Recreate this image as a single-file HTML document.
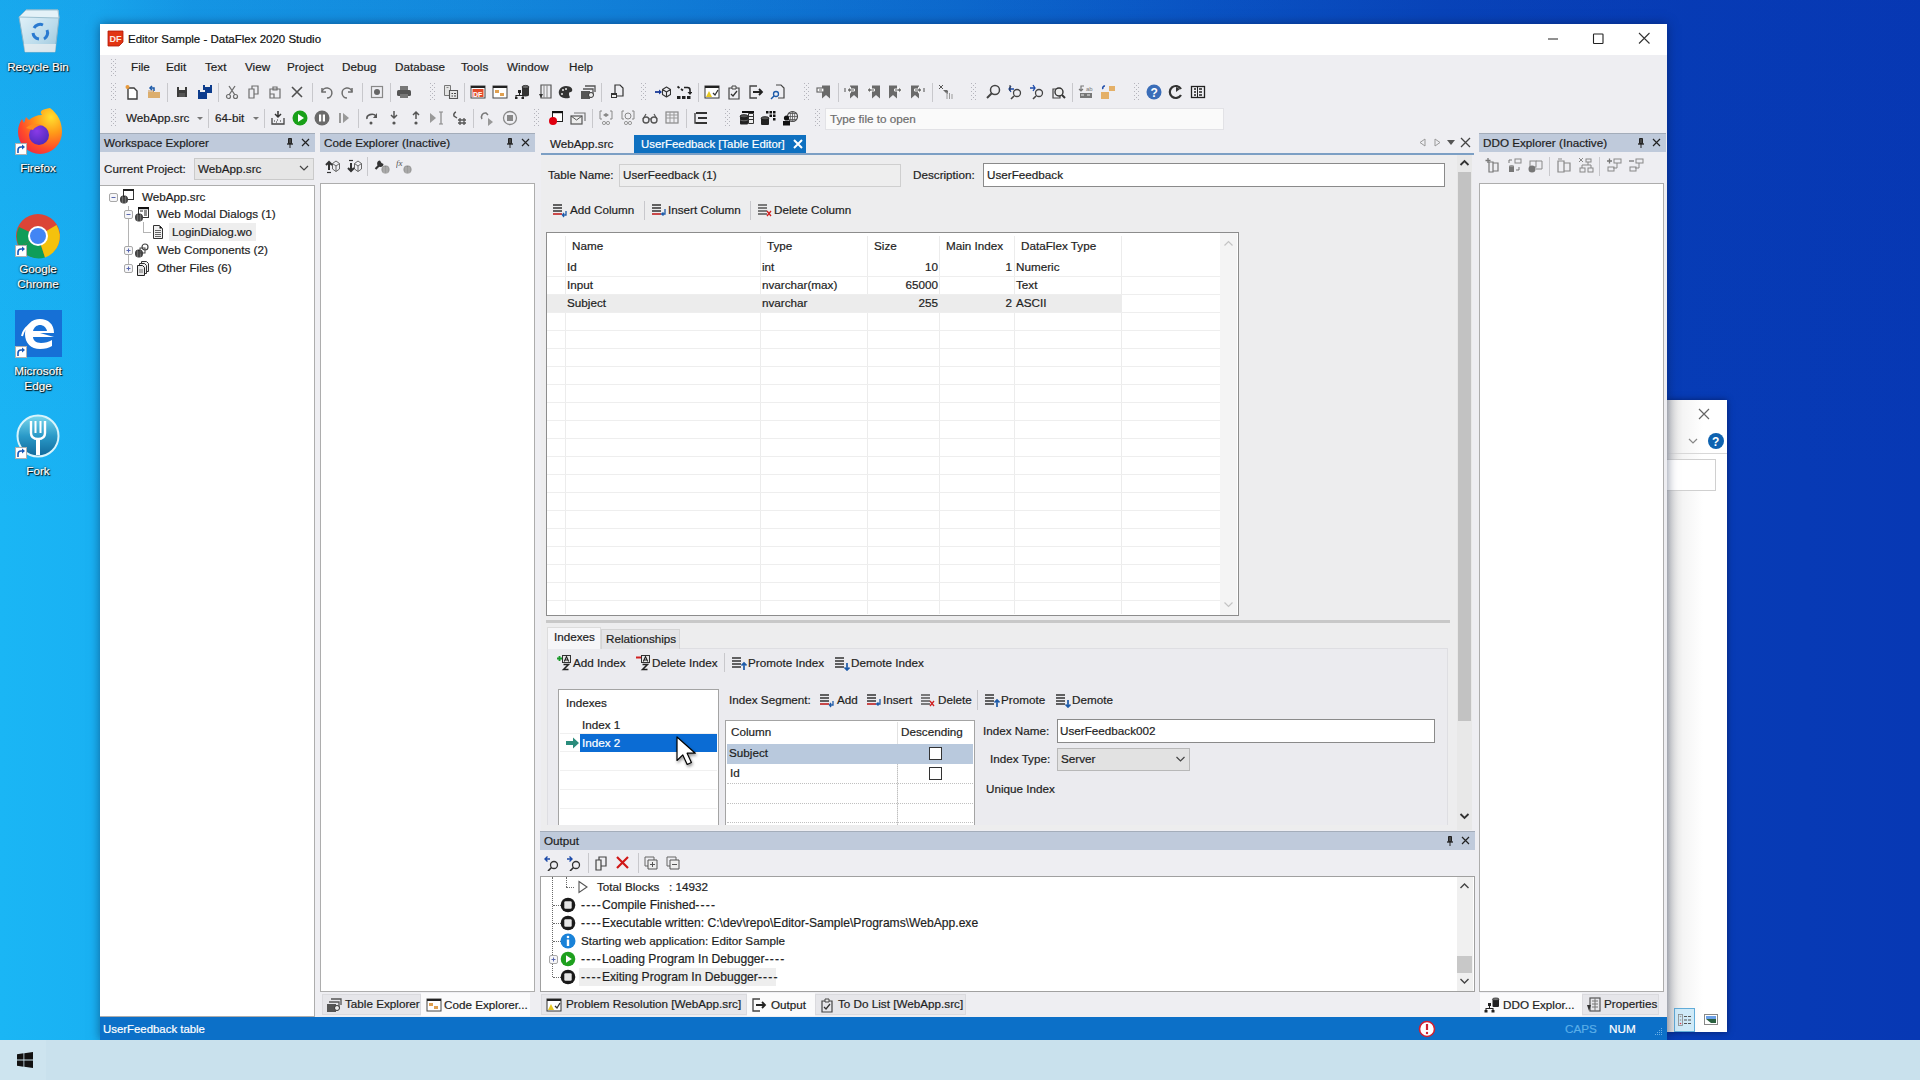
<!DOCTYPE html>
<html><head><meta charset="utf-8"><style>
html,body{margin:0;padding:0;width:1920px;height:1080px;overflow:hidden;font-family:"Liberation Sans",sans-serif;}
body>div,body>svg{position:absolute;}
.t{white-space:nowrap;-webkit-text-stroke:0.2px currentColor;}
</style></head><body>
<svg width="0" height="0" style="position:absolute"><defs><pattern id="gp" width="4" height="4" patternUnits="userSpaceOnUse"><rect x="1" y="0" width="1" height="1" fill="#b4b4bc"/><rect x="3" y="2" width="1" height="1" fill="#b4b4bc"/></pattern></defs></svg>
<div style="left:0px;top:0px;width:1920px;height:1040px;background:linear-gradient(90deg,#1ab6f5 0%,#19b1f3 5%,#16a0ea 10%,#1491e1 25%,#0d6ed0 50%,#0a57c6 62.5%,#0845ba 75%,#073cb6 88%,#0738b4 100%)"></div>
<div style="left:0px;top:0px;width:1920px;height:1040px;background:linear-gradient(180deg,rgba(8,50,170,0.10) 0%,rgba(8,50,170,0.04) 25%,rgba(8,50,170,0) 50%)"></div>
<svg style="position:absolute;left:16px;top:6px;" width="46" height="50" viewBox="0 0 46 50"><defs><linearGradient id="rbg" x1="0" y1="0" x2="1" y2="1"><stop offset="0" stop-color="#e6f4fa"/><stop offset="0.6" stop-color="#bcdcec"/><stop offset="1" stop-color="#9cc4d8"/></linearGradient></defs><path d="M3 11L10 4h32l1 8-4 34H9z" fill="url(#rbg)" stroke="#8ab4c8" stroke-width="1"/><path d="M3 11L10 4h32l1 8z" fill="#e4f2f8" stroke="#9cc0d0" stroke-width="1"/><path d="M8 38h32l-1 8H9z" fill="#e8eef0" opacity=".8"/><g fill="none" stroke="#2a7ad0" stroke-width="3"><path d="M18 22a7 7 0 0 1 9-3"/><path d="M31 24a7 7 0 0 1-3 9"/><path d="M23 33a7 7 0 0 1-6-6"/></g></svg>
<div class="t" style="left:0px;top:58.5px;height:15px;line-height:15px;font-size:11.7px;width:76px;text-align:center;color:#fff;text-shadow:0 0 2px #000,1px 1px 1px #000;">Recycle Bin</div>
<svg style="position:absolute;left:14px;top:106px;" width="50" height="50" viewBox="0 0 50 50"><defs><radialGradient id="ffg" cx="0.75" cy="0.2" r="1"><stop offset="0" stop-color="#ffe030"/><stop offset="0.35" stop-color="#ff9a18"/><stop offset="0.7" stop-color="#ff4a2a"/><stop offset="1" stop-color="#e8204a"/></radialGradient><radialGradient id="ffp" cx="0.4" cy="0.3" r="0.8"><stop offset="0" stop-color="#8a3ae8"/><stop offset="1" stop-color="#4a28b8"/></radialGradient></defs><path d="M36 2c8 6 12 14 12 24a22 22 0 0 1-44 0c0-6 2-10 4-13l2 4 2-6 3 3c3-3 8-5 13-5-2-3-3-5 8-7z" fill="url(#ffg)"/><circle cx="25" cy="29" r="10" fill="url(#ffp)"/><path d="M12 22c4-4 10-5 15-3-4 1-7 3-8 5z" fill="#ff8a20"/></svg>
<svg style="position:absolute;left:15px;top:143px;" width="12" height="12" viewBox="0 0 12 12"><rect x=".5" y=".5" width="11" height="11" fill="#fff" stroke="#b0b0b0"/><path d="M3 10V7a3 3 0 0 1 3-3h2" stroke="#1a5ab8" stroke-width="1.6" fill="none"/><path d="M7 1.5L10 4 7 6.5z" fill="#1a5ab8"/></svg>
<div class="t" style="left:0px;top:159.5px;height:15px;line-height:15px;font-size:11.7px;width:76px;text-align:center;color:#fff;text-shadow:0 0 2px #000,1px 1px 1px #000;">Firefox</div>
<svg style="position:absolute;left:15px;top:213px;" width="46" height="46" viewBox="0 0 46 46"><circle cx="23" cy="23" r="22" fill="#db4437"/><path d="M23 23L4.5 34A22 22 0 0 0 30 44.5z" fill="#0f9d58"/><path d="M23 23L41.5 12A22 22 0 0 1 30 44.5z" fill="#f4c20d"/><path d="M23 23L4.5 34A22 22 0 0 1 4 14z" fill="#0f9d58"/><circle cx="23" cy="23" r="10" fill="#fff"/><circle cx="23" cy="23" r="8" fill="#4285f4"/></svg>
<svg style="position:absolute;left:15px;top:245px;" width="12" height="12" viewBox="0 0 12 12"><rect x=".5" y=".5" width="11" height="11" fill="#fff" stroke="#b0b0b0"/><path d="M3 10V7a3 3 0 0 1 3-3h2" stroke="#1a5ab8" stroke-width="1.6" fill="none"/><path d="M7 1.5L10 4 7 6.5z" fill="#1a5ab8"/></svg>
<div class="t" style="left:0px;top:260.5px;height:15px;line-height:15px;font-size:11.7px;width:76px;text-align:center;color:#fff;text-shadow:0 0 2px #000,1px 1px 1px #000;">Google</div>
<div class="t" style="left:0px;top:275.5px;height:15px;line-height:15px;font-size:11.7px;width:76px;text-align:center;color:#fff;text-shadow:0 0 2px #000,1px 1px 1px #000;">Chrome</div>
<div style="left:15px;top:310px;width:47px;height:47px;background:#1670d6"></div>
<svg style="position:absolute;left:15px;top:310px;" width="47" height="47" viewBox="0 0 47 47"><path d="M25 23h14c0-9-6-14-14-14S10 15 10 24s6 15 15 15c5 0 9-1 12-3v-6c-3 2-7 3-11 3-5 0-8-3-8-6h21" fill="#fff"/><path d="M18 21c1-4 4-6 7-6s6 2 7 6z" fill="#1670d6"/><path d="M7 26c2-9 11-15 20-13" stroke="#fff" stroke-width="2" fill="none"/></svg>
<svg style="position:absolute;left:15px;top:346px;" width="12" height="12" viewBox="0 0 12 12"><rect x=".5" y=".5" width="11" height="11" fill="#fff" stroke="#b0b0b0"/><path d="M3 10V7a3 3 0 0 1 3-3h2" stroke="#1a5ab8" stroke-width="1.6" fill="none"/><path d="M7 1.5L10 4 7 6.5z" fill="#1a5ab8"/></svg>
<div class="t" style="left:0px;top:362.5px;height:15px;line-height:15px;font-size:11.7px;width:76px;text-align:center;color:#fff;text-shadow:0 0 2px #000,1px 1px 1px #000;">Microsoft</div>
<div class="t" style="left:0px;top:377.5px;height:15px;line-height:15px;font-size:11.7px;width:76px;text-align:center;color:#fff;text-shadow:0 0 2px #000,1px 1px 1px #000;">Edge</div>
<svg style="position:absolute;left:16px;top:414px;" width="44" height="44" viewBox="0 0 44 44"><defs><linearGradient id="fkg" x1="0" y1="0" x2="0" y2="1"><stop offset="0" stop-color="#7ad8ee"/><stop offset="0.5" stop-color="#2a9ac8"/><stop offset="1" stop-color="#10689a"/></linearGradient></defs><circle cx="22" cy="22" r="20.5" fill="url(#fkg)" stroke="#d8f4fc" stroke-width="2"/><path d="M15 7v12c0 4 3 6 7 6s7-2 7-6V7" stroke="#fff" stroke-width="2.4" fill="none"/><path d="M19.5 7v12M24.5 7v12" stroke="#fff" stroke-width="2"/><path d="M22 24v17" stroke="#fff" stroke-width="4"/></svg>
<svg style="position:absolute;left:15px;top:447px;" width="12" height="12" viewBox="0 0 12 12"><rect x=".5" y=".5" width="11" height="11" fill="#fff" stroke="#b0b0b0"/><path d="M3 10V7a3 3 0 0 1 3-3h2" stroke="#1a5ab8" stroke-width="1.6" fill="none"/><path d="M7 1.5L10 4 7 6.5z" fill="#1a5ab8"/></svg>
<div class="t" style="left:0px;top:462.5px;height:15px;line-height:15px;font-size:11.7px;width:76px;text-align:center;color:#fff;text-shadow:0 0 2px #000,1px 1px 1px #000;">Fork</div>
<div style="left:1667px;top:400px;width:60px;height:632px;background:linear-gradient(90deg,#d8d8d8 0%,#f4f4f4 25%,#ffffff 60%);box-shadow:0 0 6px rgba(0,0,30,0.5)"></div>
<svg style="position:absolute;left:1697px;top:407px;" width="14" height="14" viewBox="0 0 14 14"><path d="M2 2l10 10M12 2L2 12" stroke="#666" stroke-width="1.2"/></svg>
<svg style="position:absolute;left:1687px;top:436px;" width="12" height="10" viewBox="0 0 12 10"><path d="M2 3l4 4 4-4" stroke="#888" stroke-width="1.2" fill="none"/></svg>
<svg style="position:absolute;left:1707px;top:432px;" width="18" height="18" viewBox="0 0 18 18"><circle cx="9" cy="9" r="8" fill="#0e62b0"/><text x="5" y="14" font-size="12" font-weight="bold" font-family="Liberation Sans" fill="#fff">?</text></svg>
<div style="left:1667px;top:453px;width:60px;height:1px;background:#d8d8d8"></div>
<div style="left:1667px;top:459px;width:48px;height:30px;border:1px solid #d0d0d0;border-left:none;background:#fff"></div>
<div style="left:1674px;top:1008px;width:21px;height:24px;background:#cfeaf8;border:1px solid #62acd8;box-sizing:border-box"></div>
<svg style="position:absolute;left:1677px;top:1013px;" width="15" height="14" viewBox="0 0 15 14"><rect x="1.5" y="1.5" width="4" height="11" fill="none" stroke="#888" stroke-width=".8"/><circle cx="3.5" cy="3.5" r=".8" fill="#999"/><circle cx="3.5" cy="7" r=".8" fill="#999"/><circle cx="3.5" cy="10.5" r=".8" fill="#e04050"/><path d="M7 3.5h3M11 3.5h3M7 7h3M11 7h3M7 10.5h3M11 10.5h3" stroke="#555" stroke-width="1"/></svg>
<svg style="position:absolute;left:1704px;top:1014px;" width="14" height="11" viewBox="0 0 14 11"><rect x=".5" y=".5" width="13" height="10" fill="#fff" stroke="#888"/><rect x="2" y="2" width="10" height="3" fill="#6aa0e8"/><path d="M2 5l5 4h5V5" fill="#2a6040"/></svg>
<div style="left:100px;top:24px;width:1567px;height:1016px;background:#eeeef2;box-shadow:0 0 10px rgba(0,20,60,0.5)"></div>
<div style="left:100px;top:24px;width:1567px;height:31px;background:#ffffff"></div>
<svg style="position:absolute;left:107px;top:30px;" width="17" height="17" viewBox="0 0 17 17"><path d="M1 1h15v11l-4 4H1z" fill="#e23412" stroke="#b01808" stroke-width=".8"/><text x="2.5" y="12" font-size="9" font-weight="bold" font-family="Liberation Sans" fill="#fde8e0">DF</text></svg>
<div class="t" style="left:128px;top:31.0px;height:16px;line-height:16px;font-size:11.5px;color:#111;">Editor Sample - DataFlex 2020 Studio</div>
<svg style="position:absolute;left:1546px;top:32px;" width="14" height="14" viewBox="0 0 14 14"><path d="M2 7h10" stroke="#222" stroke-width="1"/></svg>
<svg style="position:absolute;left:1590px;top:31px;" width="16" height="16" viewBox="0 0 16 16"><rect x="3.5" y="3" width="9.5" height="9.5" rx=".6" fill="none" stroke="#222" stroke-width="1.1"/></svg>
<svg style="position:absolute;left:1636px;top:30px;" width="16" height="16" viewBox="0 0 16 16"><path d="M3 3l10.5 10.5M13.5 3L3 13.5" stroke="#333" stroke-width="1.1"/></svg>
<svg style="position:absolute;left:110px;top:59px;" width="6" height="18" viewBox="0 0 6 18"><rect width="6" height="18" fill="url(#gp)"/></svg>
<div class="t" style="left:131px;top:59.0px;height:16px;line-height:16px;font-size:11.7px;color:#1e1e1e">File</div>
<div class="t" style="left:166px;top:59.0px;height:16px;line-height:16px;font-size:11.7px;color:#1e1e1e">Edit</div>
<div class="t" style="left:205px;top:59.0px;height:16px;line-height:16px;font-size:11.7px;color:#1e1e1e">Text</div>
<div class="t" style="left:245px;top:59.0px;height:16px;line-height:16px;font-size:11.7px;color:#1e1e1e">View</div>
<div class="t" style="left:287px;top:59.0px;height:16px;line-height:16px;font-size:11.7px;color:#1e1e1e">Project</div>
<div class="t" style="left:342px;top:59.0px;height:16px;line-height:16px;font-size:11.7px;color:#1e1e1e">Debug</div>
<div class="t" style="left:395px;top:59.0px;height:16px;line-height:16px;font-size:11.7px;color:#1e1e1e">Database</div>
<div class="t" style="left:461px;top:59.0px;height:16px;line-height:16px;font-size:11.7px;color:#1e1e1e">Tools</div>
<div class="t" style="left:507px;top:59.0px;height:16px;line-height:16px;font-size:11.7px;color:#1e1e1e">Window</div>
<div class="t" style="left:569px;top:59.0px;height:16px;line-height:16px;font-size:11.7px;color:#1e1e1e">Help</div>
<svg style="position:absolute;left:110px;top:83px;" width="6" height="18" viewBox="0 0 6 18"><rect width="6" height="18" fill="url(#gp)"/></svg>
<svg style="position:absolute;left:124px;top:84px;" width="16" height="16" viewBox="0 0 16 16"><path d="M4 4h6l3 3v8H4z" fill="#fff" stroke="#3c3c3c" stroke-width="1.4"/><circle cx="3.5" cy="3" r="2" fill="#e89a3c"/></svg>
<svg style="position:absolute;left:146px;top:84px;" width="16" height="16" viewBox="0 0 16 16"><path d="M2 8h12v6H2z" fill="#dcae6e"/><path d="M2 7h5l1 1" fill="none" stroke="#c89050"/><path d="M6 2l-2 2 2 2" fill="none" stroke="#1c5aa8" stroke-width="1.5"/><path d="M4 4h4v3" fill="none" stroke="#1c5aa8" stroke-width="1.5"/></svg>
<svg style="position:absolute;left:174px;top:84px;" width="16" height="16" viewBox="0 0 16 16"><path d="M3 3h10v10H3z" fill="#3c3c3c"/><rect x="5" y="3" width="6" height="3" fill="#eee"/><rect x="5" y="9" width="6" height="4" fill="#555"/></svg>
<svg style="position:absolute;left:197px;top:84px;" width="16" height="16" viewBox="0 0 16 16"><path d="M6 1h9v8H6z" fill="#0d3c8c"/><path d="M1 6h9v9H1z" fill="#0d3c8c"/><rect x="3" y="6" width="5" height="2" fill="#eee"/><rect x="8" y="1" width="5" height="2" fill="#eee"/></svg>
<svg style="position:absolute;left:224px;top:84px;" width="16" height="16" viewBox="0 0 16 16"><path d="M5 2l6 9M11 2L5 11" stroke="#6e6e6e" stroke-width="1.3" fill="none"/><circle cx="4.5" cy="12.5" r="2" fill="none" stroke="#6e6e6e" stroke-width="1.2"/><circle cx="11.5" cy="12.5" r="2" fill="none" stroke="#6e6e6e" stroke-width="1.2"/></svg>
<svg style="position:absolute;left:246px;top:84px;" width="16" height="16" viewBox="0 0 16 16"><path d="M6 2h6v8H6z" fill="none" stroke="#6e6e6e" stroke-width="1.2"/><path d="M3 5h5v9H3z" fill="#eeeef2" stroke="#6e6e6e" stroke-width="1.2"/></svg>
<svg style="position:absolute;left:267px;top:84px;" width="16" height="16" viewBox="0 0 16 16"><path d="M3 5h10v9H3z" fill="none" stroke="#6e6e6e" stroke-width="1.2"/><path d="M6 3h4v3H6z" fill="none" stroke="#6e6e6e" stroke-width="1.2"/><path d="M3 10h4v4" fill="none" stroke="#6e6e6e" stroke-width="1.2"/></svg>
<svg style="position:absolute;left:289px;top:84px;" width="16" height="16" viewBox="0 0 16 16"><path d="M3 3l10 10M13 3L3 13" stroke="#505050" stroke-width="1.6"/></svg>
<svg style="position:absolute;left:318px;top:84px;" width="16" height="16" viewBox="0 0 16 16"><path d="M4 4v4h4" fill="none" stroke="#6e6e6e" stroke-width="1.5"/><path d="M4 8a5 5 0 1 1 5 6" fill="none" stroke="#6e6e6e" stroke-width="1.5"/></svg>
<svg style="position:absolute;left:340px;top:84px;" width="16" height="16" viewBox="0 0 16 16"><path d="M12 4v4H8" fill="none" stroke="#6e6e6e" stroke-width="1.5"/><path d="M12 8a5 5 0 1 0-5 6" fill="none" stroke="#6e6e6e" stroke-width="1.5"/></svg>
<svg style="position:absolute;left:369px;top:84px;" width="16" height="16" viewBox="0 0 16 16"><rect x="2.5" y="2.5" width="11" height="11" fill="none" stroke="#888" stroke-width="1.2"/><circle cx="8" cy="8" r="3" fill="#666"/></svg>
<svg style="position:absolute;left:396px;top:84px;" width="16" height="16" viewBox="0 0 16 16"><rect x="1" y="6" width="14" height="6" rx="1.5" fill="#555"/><rect x="4" y="2" width="8" height="4" fill="#777"/><rect x="4" y="10" width="8" height="4" fill="#777"/></svg>
<div style="left:167px;top:83px;width:1px;height:19px;background:#c8c8cc"></div>
<div style="left:218px;top:83px;width:1px;height:19px;background:#c8c8cc"></div>
<div style="left:312px;top:83px;width:1px;height:19px;background:#c8c8cc"></div>
<div style="left:362px;top:83px;width:1px;height:19px;background:#c8c8cc"></div>
<div style="left:390px;top:83px;width:1px;height:19px;background:#c8c8cc"></div>
<svg style="position:absolute;left:429px;top:83px;" width="6" height="18" viewBox="0 0 6 18"><rect width="6" height="18" fill="url(#gp)"/></svg>
<svg style="position:absolute;left:443px;top:84px;" width="16" height="16" viewBox="0 0 16 16"><path d="M1.5 1.5h6v10h-6z" fill="#e4e4e4" stroke="#777"/><path d="M3.5 3.5h2" stroke="#888"/><path d="M6.5 6.5h8v8h-8z" fill="#e8e8e8" stroke="#555" stroke-width="1.1"/><path d="M8.5 9.5h1.5M11 9.5h2M8.5 12h1.5M11 12h2" stroke="#444" stroke-width="1.2"/></svg>
<svg style="position:absolute;left:470px;top:84px;" width="16" height="16" viewBox="0 0 16 16"><rect x="1" y="2" width="14" height="12" fill="#fff" stroke="#444"/><rect x="1" y="2" width="14" height="2" fill="#222"/><rect x="2.5" y="5" width="11" height="8" fill="#e24a2a"/><text x="3" y="12.5" font-size="7" font-family="Liberation Sans" font-weight="bold" fill="#fff">DF</text></svg>
<svg style="position:absolute;left:492px;top:84px;" width="16" height="16" viewBox="0 0 16 16"><rect x="1" y="2" width="14" height="12" fill="#fff" stroke="#444"/><rect x="1" y="2" width="14" height="2" fill="#222"/><rect x="3" y="6" width="4" height="3" fill="#e0a050"/><rect x="8" y="9" width="4" height="3" fill="#e0a050"/></svg>
<svg style="position:absolute;left:514px;top:84px;" width="16" height="16" viewBox="0 0 16 16"><rect x="8" y="3" width="7" height="8" fill="#333"/><ellipse cx="11.5" cy="3" rx="3.5" ry="1.6" fill="#666" stroke="#222" stroke-width=".8"/><ellipse cx="11.5" cy="11" rx="3.5" ry="1.4" fill="#333"/><rect x="4" y="6" width="3" height="3" fill="#222"/><path d="M5.5 9v2.5M2 14v-2.5h7V14" stroke="#222" stroke-width="1.1" fill="none"/><rect x="1" y="13" width="2.5" height="2" fill="#222"/><rect x="7.5" y="13" width="2.5" height="2" fill="#222"/></svg>
<svg style="position:absolute;left:537px;top:84px;" width="16" height="16" viewBox="0 0 16 16"><path d="M4 1h10v13H4z" fill="none" stroke="#555" stroke-width="1.2"/><path d="M7 1v13M10 1v13" stroke="#888"/><path d="M2 10l2 4 2-4" fill="#333"/></svg>
<svg style="position:absolute;left:558px;top:84px;" width="16" height="16" viewBox="0 0 16 16"><path d="M8 2c5 0 7 3 6 5-1 2-3 0-3 3s2 3 0 4c-3 1-9 0-10-4S3 2 8 2z" fill="#333"/><circle cx="5" cy="6" r="1" fill="#eee"/><circle cx="8" cy="5" r="1" fill="#eee"/><circle cx="4" cy="10" r="1" fill="#eee"/></svg>
<svg style="position:absolute;left:580px;top:84px;" width="16" height="16" viewBox="0 0 16 16"><rect x="1" y="7" width="9" height="8" fill="#555"/><path d="M3 5h10v6" fill="none" stroke="#555" stroke-width="1.3"/><path d="M5 2h10v6" fill="none" stroke="#555" stroke-width="1.3"/><circle cx="11" cy="11" r="2.5" fill="#eee" stroke="#333"/></svg>
<svg style="position:absolute;left:609px;top:84px;" width="16" height="16" viewBox="0 0 16 16"><path d="M6 1h5l3 3v8H6z" fill="none" stroke="#333" stroke-width="1.2"/><rect x="2" y="9" width="6" height="5" fill="#333"/><rect x="3" y="11" width="4" height="2" fill="#eee"/></svg>
<div style="left:464px;top:83px;width:1px;height:19px;background:#c8c8cc"></div>
<div style="left:601px;top:83px;width:1px;height:19px;background:#c8c8cc"></div>
<svg style="position:absolute;left:640px;top:83px;" width="6" height="18" viewBox="0 0 6 18"><rect width="6" height="18" fill="url(#gp)"/></svg>
<svg style="position:absolute;left:655px;top:84px;" width="16" height="16" viewBox="0 0 16 16"><path d="M0 8h5" stroke="#1a3a98" stroke-width="1.8"/><path d="M4 5.5L7 8 4 10.5z" fill="#1a3a98"/><path d="M7.5 5.5L11.5 3l4 2.5v5l-4 2.5-4-2.5z M7.5 5.5l4 2.5 4-2.5M11.5 8v5" fill="none" stroke="#333" stroke-width="1.1" stroke-linejoin="round"/></svg>
<svg style="position:absolute;left:676px;top:84px;" width="16" height="16" viewBox="0 0 16 16"><path d="M1.5 2.5l2 1.5M5 5l2 1.5" stroke="#222" stroke-width="1.8"/><path d="M8 3.5h3.5a2.5 2.5 0 0 1 2.5 2.5v3" stroke="#222" stroke-width="1.6" fill="none"/><path d="M11.5 8l2.5 3 2.5-3z" fill="#222"/><rect x="1" y="12" width="3.5" height="3" fill="#222"/><rect x="6" y="12" width="3.5" height="3" fill="#222"/><rect x="11" y="12" width="3.5" height="3" fill="#222"/></svg>
<svg style="position:absolute;left:704px;top:84px;" width="16" height="16" viewBox="0 0 16 16"><rect x="1" y="2" width="14" height="12" fill="#fff" stroke="#333"/><rect x="1" y="2" width="14" height="2" fill="#222"/><path d="M2 13l3-6 3 6z" fill="#e8c820"/><path d="M9 9l2 2 3-5" stroke="#333" stroke-width="1.3" fill="none"/></svg>
<svg style="position:absolute;left:726px;top:84px;" width="16" height="16" viewBox="0 0 16 16"><path d="M3 4h10v11H3z" fill="none" stroke="#444" stroke-width="1.2"/><path d="M6 2h4v3H6z" fill="#eee" stroke="#444"/><path d="M5 10l2 2 4-5" stroke="#333" stroke-width="1.3" fill="none"/></svg>
<svg style="position:absolute;left:748px;top:84px;" width="16" height="16" viewBox="0 0 16 16"><path d="M9 2H2v12h7" fill="none" stroke="#444" stroke-width="1.3"/><path d="M5 8h9M11 5l3 3-3 3" stroke="#222" stroke-width="1.8" fill="none"/></svg>
<svg style="position:absolute;left:770px;top:84px;" width="16" height="16" viewBox="0 0 16 16"><path d="M6 1h5l3 3v10H8" fill="none" stroke="#444" stroke-width="1.2"/><circle cx="6" cy="10" r="2.5" fill="none" stroke="#1c5aa8" stroke-width="1.3"/><path d="M4 12l-3 3" stroke="#1c5aa8" stroke-width="1.5"/></svg>
<div style="left:698px;top:83px;width:1px;height:19px;background:#c8c8cc"></div>
<svg style="position:absolute;left:803px;top:83px;" width="6" height="18" viewBox="0 0 6 18"><rect width="6" height="18" fill="url(#gp)"/></svg>
<svg style="position:absolute;left:816px;top:84px;" width="16" height="16" viewBox="0 0 16 16"><path d="M6 1.5h8v13l-4-3.5-4 3.5z" fill="#6a6a6a"/><rect x="1" y="4" width="7" height="4" fill="#fff" stroke="#6a6a6a" stroke-width="1.2"/><path d="M3 6h3" stroke="#6a6a6a"/></svg>
<svg style="position:absolute;left:844px;top:84px;" width="16" height="16" viewBox="0 0 16 16"><path d="M6 1.5h8v13l-4-3.5-4 3.5z" fill="#6a6a6a"/><path d="M3 6l3.5-3v2h4v2h-4v2z" fill="#6a6a6a" stroke="#fff" stroke-width=".9" stroke-linejoin="round"/><path d="M1 4v4" stroke="#6a6a6a" stroke-width="1.2"/></svg>
<svg style="position:absolute;left:866px;top:84px;" width="16" height="16" viewBox="0 0 16 16"><path d="M6 1.5h8v13l-4-3.5-4 3.5z" fill="#6a6a6a"/><path d="M1 6l3.5-3v2h4v2h-4v2z" fill="#6a6a6a" stroke="#fff" stroke-width=".9" stroke-linejoin="round"/></svg>
<svg style="position:absolute;left:887px;top:84px;" width="16" height="16" viewBox="0 0 16 16"><path d="M2 1.5h8v13l-4-3.5-4 3.5z" fill="#6a6a6a"/><path d="M15 6l-3.5-3v2h-4v2h4v2z" fill="#6a6a6a" stroke="#fff" stroke-width=".9" stroke-linejoin="round"/></svg>
<svg style="position:absolute;left:909px;top:84px;" width="16" height="16" viewBox="0 0 16 16"><path d="M2 1.5h8v13l-4-3.5-4 3.5z" fill="#6a6a6a"/><path d="M13 6l-3.5-3v2h-4v2h4v2z" fill="#6a6a6a" stroke="#fff" stroke-width=".9" stroke-linejoin="round"/><path d="M15 4v4" stroke="#6a6a6a" stroke-width="1.2"/></svg>
<svg style="position:absolute;left:938px;top:84px;" width="16" height="16" viewBox="0 0 16 16"><path d="M1 1l4 4M5 1L1 5" stroke="#555" stroke-width="1"/><path d="M5 6h4l1 1v3l-2-1z" fill="#6a6a6a"/><path d="M9 8v7M11.5 9v6M14 10v5" stroke="#999" stroke-width="1"/></svg>
<div style="left:838px;top:83px;width:1px;height:19px;background:#c8c8cc"></div>
<div style="left:932px;top:83px;width:1px;height:19px;background:#c8c8cc"></div>
<svg style="position:absolute;left:970px;top:83px;" width="6" height="18" viewBox="0 0 6 18"><rect width="6" height="18" fill="url(#gp)"/></svg>
<svg style="position:absolute;left:985px;top:84px;" width="16" height="16" viewBox="0 0 16 16"><circle cx="10" cy="6" r="4.5" fill="none" stroke="#444" stroke-width="1.5"/><path d="M7 9l-5 5" stroke="#444" stroke-width="2"/></svg>
<svg style="position:absolute;left:1007px;top:84px;" width="16" height="16" viewBox="0 0 16 16"><circle cx="10" cy="9" r="3.5" fill="none" stroke="#444" stroke-width="1.3"/><path d="M7 12l-3 3" stroke="#444" stroke-width="1.6"/><path d="M2 5h5M4 2L2 5l2 3" stroke="#1c4aa8" stroke-width="1.3" fill="none"/><path d="M3 1v6" stroke="#333"/></svg>
<svg style="position:absolute;left:1029px;top:84px;" width="16" height="16" viewBox="0 0 16 16"><circle cx="10" cy="9" r="3.5" fill="none" stroke="#444" stroke-width="1.3"/><path d="M7 12l-3 3" stroke="#444" stroke-width="1.6"/><path d="M1 4h5M4 1l2 3-2 3" stroke="#1c4aa8" stroke-width="1.3" fill="none"/></svg>
<svg style="position:absolute;left:1050px;top:84px;" width="16" height="16" viewBox="0 0 16 16"><path d="M3 5h7v9H3z" fill="none" stroke="#444" stroke-width="1.2"/><circle cx="9" cy="8" r="4" fill="#eee" stroke="#333" stroke-width="1.4"/><path d="M12 11l3 3" stroke="#333" stroke-width="2"/></svg>
<svg style="position:absolute;left:1078px;top:84px;" width="16" height="16" viewBox="0 0 16 16"><path d="M2 9h12v5H2z" fill="#777"/><path d="M3 11h3M9 11h3" stroke="#eee"/><path d="M6 2H3v5M1 5l2 2 2-2" stroke="#777" fill="none" stroke-width="1.2"/><text x="8" y="7" font-size="6" font-family="Liberation Sans" fill="#777">ab</text></svg>
<svg style="position:absolute;left:1100px;top:84px;" width="16" height="16" viewBox="0 0 16 16"><rect x="1" y="8" width="8" height="7" fill="#e4b068"/><rect x="9" y="2" width="6" height="5" fill="#e4b068"/><path d="M5 2a2 2 0 0 0-2 3" stroke="#1c4aa8" stroke-width="1.6" fill="none"/></svg>
<div style="left:1072px;top:83px;width:1px;height:19px;background:#c8c8cc"></div>
<svg style="position:absolute;left:1133px;top:83px;" width="6" height="18" viewBox="0 0 6 18"><rect width="6" height="18" fill="url(#gp)"/></svg>
<svg style="position:absolute;left:1146px;top:84px;" width="16" height="16" viewBox="0 0 16 16"><circle cx="8" cy="8" r="7.5" fill="#3a6db8"/><text x="4.5" y="13" font-size="12" font-weight="bold" font-family="Liberation Sans" fill="#fff">?</text></svg>
<svg style="position:absolute;left:1168px;top:84px;" width="16" height="16" viewBox="0 0 16 16"><path d="M13 5A6 6 0 1 0 13 11" fill="none" stroke="#333" stroke-width="2.2"/><path d="M8 3v5l4-3" fill="#333"/></svg>
<svg style="position:absolute;left:1190px;top:84px;" width="16" height="16" viewBox="0 0 16 16"><rect x="1.5" y="2.5" width="13" height="11" fill="none" stroke="#222" stroke-width="1.3"/><path d="M4 5h2M9 5h3M4 8h2M9 8h3M4 11h2M9 11h3" stroke="#222" stroke-width="1.5"/><path d="M7.5 3v10" stroke="#222"/></svg>
<svg style="position:absolute;left:110px;top:109px;" width="6" height="18" viewBox="0 0 6 18"><rect width="6" height="18" fill="url(#gp)"/></svg>
<div class="t" style="left:126px;top:110.0px;height:16px;line-height:16px;font-size:11.7px;color:#1e1e1e">WebApp.src</div>
<svg style="position:absolute;left:197px;top:116px;" width="7" height="5" viewBox="0 0 7 5"><path d="M0 1h6L3 4z" fill="#777"/></svg>
<div style="left:208px;top:109px;width:1px;height:19px;background:#c8c8cc"></div>
<div class="t" style="left:215px;top:110.0px;height:16px;line-height:16px;font-size:11.7px;color:#1e1e1e">64-bit</div>
<svg style="position:absolute;left:253px;top:116px;" width="7" height="5" viewBox="0 0 7 5"><path d="M0 1h6L3 4z" fill="#777"/></svg>
<div style="left:264px;top:109px;width:1px;height:19px;background:#c8c8cc"></div>
<svg style="position:absolute;left:270px;top:110px;" width="16" height="16" viewBox="0 0 16 16"><path d="M2 8v6h12V8" fill="none" stroke="#444" stroke-width="1.3"/><path d="M8 1v6M5 4l3 3 3-3" stroke="#333" stroke-width="1.5" fill="none"/><path d="M4 11h1M7 10h1M10 11h1M6 12h1" stroke="#333"/></svg>
<svg style="position:absolute;left:292px;top:110px;" width="16" height="16" viewBox="0 0 16 16"><circle cx="8" cy="8" r="7.5" fill="#18a018"/><path d="M6 4l6 4-6 4z" fill="#fff"/></svg>
<svg style="position:absolute;left:314px;top:110px;" width="16" height="16" viewBox="0 0 16 16"><circle cx="8" cy="8" r="7.5" fill="#6a6a6a"/><rect x="5" y="4.5" width="2.2" height="7" fill="#fff"/><rect x="8.8" y="4.5" width="2.2" height="7" fill="#fff"/></svg>
<svg style="position:absolute;left:336px;top:110px;" width="16" height="16" viewBox="0 0 16 16"><rect x="3" y="3" width="2" height="10" fill="#999"/><path d="M7 3l6 5-6 5z" fill="#999"/></svg>
<svg style="position:absolute;left:364px;top:110px;" width="16" height="16" viewBox="0 0 16 16"><path d="M3 9a5 4 0 0 1 9-3" fill="none" stroke="#555" stroke-width="1.6"/><path d="M13 3v5h-4" fill="#555"/><circle cx="7" cy="13" r="1.5" fill="#555"/></svg>
<svg style="position:absolute;left:386px;top:110px;" width="16" height="16" viewBox="0 0 16 16"><path d="M8 1v7M5 5l3 3 3-3" stroke="#555" stroke-width="1.5" fill="none"/><circle cx="8" cy="13" r="1.6" fill="#555"/></svg>
<svg style="position:absolute;left:408px;top:110px;" width="16" height="16" viewBox="0 0 16 16"><path d="M8 9V2M5 5l3-3 3 3" stroke="#555" stroke-width="1.5" fill="none"/><circle cx="8" cy="13" r="1.6" fill="#555"/></svg>
<svg style="position:absolute;left:429px;top:110px;" width="16" height="16" viewBox="0 0 16 16"><path d="M1 3l6 5-6 5z" fill="#999"/><path d="M10 2h4M12 2v12M10 14h4" stroke="#888" stroke-width="1.2"/></svg>
<svg style="position:absolute;left:452px;top:110px;" width="16" height="16" viewBox="0 0 16 16"><path d="M4 2a3 3 0 0 0-2 4l3 2" stroke="#555" stroke-width="1.5" fill="none"/><path d="M8 8v7M12 8v7M6 10h8M6 13h8" stroke="#555" stroke-width="1.3"/></svg>
<svg style="position:absolute;left:479px;top:110px;" width="16" height="16" viewBox="0 0 16 16"><path d="M3 9a4 4 0 0 1 4-6l2 2" fill="none" stroke="#777" stroke-width="1.5"/><path d="M9 8l5 4-5 4z" fill="#999"/></svg>
<svg style="position:absolute;left:502px;top:110px;" width="16" height="16" viewBox="0 0 16 16"><circle cx="8" cy="8" r="6.5" fill="none" stroke="#888" stroke-width="1.3"/><rect x="5" y="5" width="6" height="6" fill="#888"/></svg>
<div style="left:358px;top:109px;width:1px;height:19px;background:#c8c8cc"></div>
<div style="left:473px;top:109px;width:1px;height:19px;background:#c8c8cc"></div>
<svg style="position:absolute;left:533px;top:109px;" width="6" height="18" viewBox="0 0 6 18"><rect width="6" height="18" fill="url(#gp)"/></svg>
<svg style="position:absolute;left:548px;top:110px;" width="16" height="16" viewBox="0 0 16 16"><rect x="4.5" y="1.5" width="10" height="10" fill="#fff" stroke="#222"/><rect x="4" y="1" width="11" height="2.2" fill="#111"/><circle cx="5" cy="11" r="4" fill="#e00010"/></svg>
<svg style="position:absolute;left:570px;top:110px;" width="16" height="16" viewBox="0 0 16 16"><path d="M4 3h11v8" fill="none" stroke="#777" stroke-width="1.2"/><rect x="1" y="6" width="11" height="8" fill="#eee" stroke="#555" stroke-width="1.2"/><path d="M1 6l5.5 4L12 6" stroke="#555" fill="none"/></svg>
<svg style="position:absolute;left:598px;top:110px;" width="16" height="16" viewBox="0 0 16 16"><path d="M2 1v8h2M14 1v8h-2M2 1h2M12 1h2" stroke="#888" fill="none"/><path d="M5 5l3-2 3 2-3 2z" fill="#888"/><circle cx="6" cy="13" r="1.6" fill="none" stroke="#999"/><circle cx="10" cy="13" r="1.6" fill="none" stroke="#999"/></svg>
<svg style="position:absolute;left:620px;top:110px;" width="16" height="16" viewBox="0 0 16 16"><path d="M2 1v8h2M14 1v8h-2M2 1h2M12 1h2" stroke="#888" fill="none"/><circle cx="8" cy="6" r="3" fill="none" stroke="#888"/><circle cx="6" cy="13" r="1.6" fill="none" stroke="#999"/><circle cx="10" cy="13" r="1.6" fill="none" stroke="#999"/></svg>
<svg style="position:absolute;left:642px;top:110px;" width="16" height="16" viewBox="0 0 16 16"><circle cx="4" cy="10" r="3" fill="none" stroke="#555" stroke-width="1.4"/><circle cx="12" cy="10" r="3" fill="none" stroke="#555" stroke-width="1.4"/><path d="M7 9h2M1 9l3-5M15 9l-3-5" stroke="#555" stroke-width="1.2"/></svg>
<svg style="position:absolute;left:664px;top:110px;" width="16" height="16" viewBox="0 0 16 16"><rect x="2" y="2" width="12" height="11" fill="none" stroke="#888" stroke-width="1.2"/><path d="M2 5h12M2 8h12M6 2v11M10 2v11" stroke="#999"/></svg>
<svg style="position:absolute;left:692px;top:110px;" width="16" height="16" viewBox="0 0 16 16"><path d="M4 3h11M6 8h9M4 13h11" stroke="#333" stroke-width="2"/><path d="M3 3v10h2" stroke="#333" fill="none" stroke-width="1.3"/></svg>
<div style="left:592px;top:109px;width:1px;height:19px;background:#c8c8cc"></div>
<div style="left:686px;top:109px;width:1px;height:19px;background:#c8c8cc"></div>
<svg style="position:absolute;left:724px;top:109px;" width="6" height="18" viewBox="0 0 6 18"><rect width="6" height="18" fill="url(#gp)"/></svg>
<svg style="position:absolute;left:739px;top:110px;" width="16" height="16" viewBox="0 0 16 16"><rect x="3" y="1" width="12" height="2" fill="#111"/><path d="M9.5 3.5h5v10h-5z" fill="#eee" stroke="#333"/><path d="M9.5 6.5h5M9.5 9.5h5" stroke="#333"/><rect x="1" y="6" width="8" height="8.5" rx="1" fill="#222"/><ellipse cx="5" cy="6.2" rx="4" ry="1.6" fill="#555" stroke="#111" stroke-width=".7"/><path d="M1.2 10c1.5 1 6 1 7.6 0" stroke="#888" stroke-width=".7" fill="none"/></svg>
<svg style="position:absolute;left:760px;top:110px;" width="16" height="16" viewBox="0 0 16 16"><rect x="1" y="8" width="8" height="7" rx="1" fill="#222"/><ellipse cx="5" cy="8.2" rx="4" ry="1.6" fill="#555" stroke="#111" stroke-width=".7"/><rect x="6" y="1" width="2.5" height="2.5" fill="#111"/><rect x="9.5" y="1" width="2.5" height="2.5" fill="#111"/><rect x="13" y="1" width="2.5" height="2.5" fill="#111"/><rect x="13" y="4.5" width="2.5" height="2.5" fill="#111"/><rect x="13" y="8" width="2.5" height="2.5" fill="#111"/><rect x="9.5" y="4.5" width="2.5" height="2.5" fill="#111"/></svg>
<svg style="position:absolute;left:782px;top:110px;" width="16" height="16" viewBox="0 0 16 16"><circle cx="10.5" cy="6.5" r="5" fill="none" stroke="#444" stroke-width="1.1"/><path d="M5.5 6.5h10M10.5 1.5v10M7 3.5h7M7 9.5h7" stroke="#555" stroke-width=".8"/><ellipse cx="10.5" cy="6.5" rx="2.2" ry="5" fill="none" stroke="#555" stroke-width=".8"/><circle cx="4.5" cy="8" r="2.6" fill="#111"/><rect x="1" y="11" width="7" height="4.5" fill="#111"/></svg>
<svg style="position:absolute;left:814px;top:109px;" width="6" height="18" viewBox="0 0 6 18"><rect width="6" height="18" fill="url(#gp)"/></svg>
<div style="left:825px;top:108px;width:399px;height:22px;background:#fafafa;border:1px solid #e2e2e6;box-sizing:border-box"></div>
<div class="t" style="left:830px;top:111.0px;height:16px;line-height:16px;font-size:11.7px;color:#6d6d6d">Type file to open</div>
<div style="left:100px;top:133px;width:215px;height:19px;background:#bfcadb"></div>
<div class="t" style="left:104px;top:135.0px;height:16px;line-height:16px;font-size:11.7px;color:#1e1e1e">Workspace Explorer</div>
<svg style="position:absolute;left:285px;top:137px;" width="10" height="12" viewBox="0 0 10 12"><path d="M3.5 1.5h3v5h-3z" fill="#444" stroke="#222" stroke-width="1"/><path d="M2 7h6" stroke="#222" stroke-width="1.3"/><path d="M5 7v4" stroke="#222" stroke-width="1"/></svg>
<svg style="position:absolute;left:301px;top:138px;" width="9" height="9" viewBox="0 0 9 9"><path d="M1 1l7 7M8 1L1 8" stroke="#222" stroke-width="1.2"/></svg>
<div style="left:100px;top:133px;width:215px;height:1px;background:#a4adba"></div>
<div class="t" style="left:104px;top:161.0px;height:16px;line-height:16px;font-size:11.7px;color:#1e1e1e">Current Project:</div>
<div style="left:194px;top:158px;width:120px;height:22px;background:#e6e6e6;border:1px solid #cacaca;box-sizing:border-box"></div>
<div class="t" style="left:198px;top:161.0px;height:16px;line-height:16px;font-size:11.7px;color:#1e1e1e">WebApp.src</div>
<svg style="position:absolute;left:299px;top:165px;" width="10" height="7" viewBox="0 0 10 7"><path d="M1 1l4 4 4-4" stroke="#444" stroke-width="1.2" fill="none"/></svg>
<div style="left:100px;top:185px;width:215px;height:832px;background:#fff;border:1px solid #adadad;border-left:none;box-sizing:border-box"></div>
<div style="left:128px;top:206px;width:1px;height:62px;background:#b4b4b4"></div>
<div style="left:143px;top:222px;width:1px;height:10px;background:#b4b4b4"></div>
<div style="left:143px;top:232px;width:8px;height:1px;background:#b4b4b4"></div>
<svg style="position:absolute;left:109px;top:193px;" width="9" height="9" viewBox="0 0 9 9"><rect x=".5" y=".5" width="8" height="8" rx="1.5" fill="#f6f6f8" stroke="#a8a8a8"/><path d="M2.5 4.5h4" stroke="#5a68b0"/></svg>
<svg style="position:absolute;left:119px;top:188px;" width="16" height="16" viewBox="0 0 16 16"><rect x="4.5" y="1.5" width="10" height="10" fill="#fff" stroke="#333"/><rect x="4" y="1" width="11" height="2" fill="#222"/><circle cx="5" cy="11.5" r="4" fill="#2a2a2a"/><path d="M1.5 10h7M1.2 12h7.6M1.5 14h7M3.5 7.8v7.4M6.5 7.8v7.4" stroke="#8a8a8a" stroke-width=".6"/></svg>
<div class="t" style="left:142px;top:189.0px;height:16px;line-height:16px;font-size:11.7px;color:#1e1e1e">WebApp.src</div>
<svg style="position:absolute;left:124px;top:210px;" width="9" height="9" viewBox="0 0 9 9"><rect x=".5" y=".5" width="8" height="8" rx="1.5" fill="#f6f6f8" stroke="#a8a8a8"/><path d="M2.5 4.5h4" stroke="#5a68b0"/></svg>
<svg style="position:absolute;left:134px;top:206px;" width="16" height="16" viewBox="0 0 16 16"><rect x="4.5" y="1.5" width="10" height="10" fill="#fff" stroke="#333"/><rect x="4" y="1" width="11" height="2.2" fill="#111"/><path d="M6 5h3M10 5h3M10 7h3M10 9h3" stroke="#222" stroke-width="1.2"/><circle cx="5" cy="11.5" r="4" fill="#2a2a2a"/><path d="M1.5 10h7M1.2 12h7.6M1.5 14h7M3.5 7.8v7.4M6.5 7.8v7.4" stroke="#8a8a8a" stroke-width=".6"/></svg>
<div class="t" style="left:157px;top:206.0px;height:16px;line-height:16px;font-size:11.7px;color:#1e1e1e">Web Modal Dialogs (1)</div>
<svg style="position:absolute;left:150px;top:224px;" width="16" height="16" viewBox="0 0 16 16"><path d="M3.5 1.5h6l3 3v10h-9z" fill="#f0f0f0" stroke="#333"/><path d="M9.5 1.5v3h3z" fill="#111"/><path d="M5 6.5h6M5 8.5h6M5 10.5h6M5 12.5h6" stroke="#555" stroke-width=".9"/></svg>
<div style="left:169px;top:223px;width:87px;height:18px;background:#eeeeee"></div>
<div class="t" style="left:172px;top:224.0px;height:16px;line-height:16px;font-size:11.7px;color:#1e1e1e">LoginDialog.wo</div>
<svg style="position:absolute;left:124px;top:246px;" width="9" height="9" viewBox="0 0 9 9"><rect x=".5" y=".5" width="8" height="8" rx="1.5" fill="#f6f6f8" stroke="#a8a8a8"/><path d="M2.5 4.5h4" stroke="#5a68b0"/><path d="M4.5 2.5v4" stroke="#5a68b0"/></svg>
<svg style="position:absolute;left:134px;top:242px;" width="16" height="16" viewBox="0 0 16 16"><circle cx="5" cy="11.5" r="4" fill="#2a2a2a"/><path d="M1.5 10h7M1.2 12h7.6M1.5 14h7M3.5 7.8v7.4M6.5 7.8v7.4" stroke="#8a8a8a" stroke-width=".6"/><circle cx="11" cy="5" r="3" fill="none" stroke="#444" stroke-width="1.2"/><rect x="6" y="6" width="5" height="5" fill="none" stroke="#444"/></svg>
<div class="t" style="left:157px;top:242.0px;height:16px;line-height:16px;font-size:11.7px;color:#1e1e1e">Web Components (2)</div>
<svg style="position:absolute;left:124px;top:264px;" width="9" height="9" viewBox="0 0 9 9"><rect x=".5" y=".5" width="8" height="8" rx="1.5" fill="#f6f6f8" stroke="#a8a8a8"/><path d="M2.5 4.5h4" stroke="#5a68b0"/><path d="M4.5 2.5v4" stroke="#5a68b0"/></svg>
<svg style="position:absolute;left:134px;top:260px;" width="16" height="16" viewBox="0 0 16 16"><path d="M7.5 1.5h5l2 2v8h-7z" fill="#eee" stroke="#333"/><path d="M5.5 3.5h5l2 2v8h-7z" fill="#eee" stroke="#333"/><path d="M3.5 5.5h5l2 2v8h-7z" fill="#e8e8e8" stroke="#222"/><path d="M5 10h4M5 12h4" stroke="#555" stroke-width=".8"/></svg>
<div class="t" style="left:157px;top:260.0px;height:16px;line-height:16px;font-size:11.7px;color:#1e1e1e">Other Files (6)</div>
<div style="left:320px;top:133px;width:215px;height:19px;background:#bfcadb"></div>
<div class="t" style="left:324px;top:135.0px;height:16px;line-height:16px;font-size:11.7px;color:#1e1e1e">Code Explorer (Inactive)</div>
<svg style="position:absolute;left:505px;top:137px;" width="10" height="12" viewBox="0 0 10 12"><path d="M3.5 1.5h3v5h-3z" fill="#444" stroke="#222" stroke-width="1"/><path d="M2 7h6" stroke="#222" stroke-width="1.3"/><path d="M5 7v4" stroke="#222" stroke-width="1"/></svg>
<svg style="position:absolute;left:521px;top:138px;" width="9" height="9" viewBox="0 0 9 9"><path d="M1 1l7 7M8 1L1 8" stroke="#222" stroke-width="1.2"/></svg>
<div style="left:320px;top:133px;width:215px;height:1px;background:#a4adba"></div>
<svg style="position:absolute;left:324px;top:158px;" width="16" height="16" viewBox="0 0 16 16"><path d="M8.5 5.5l3.5-2.5 3.5 2.5v5.5l-3.5 2.5-3.5-2.5z M8.5 5.5l3.5 2.5 3.5-2.5M12 8v5.5" fill="none" stroke="#666"/><path d="M5 12V4M2 7l3-3 3 3" stroke="#333" stroke-width="2" fill="none"/><path d="M3 14.5h4" stroke="#333" stroke-width="1.2"/></svg>
<svg style="position:absolute;left:346px;top:158px;" width="16" height="16" viewBox="0 0 16 16"><path d="M8.5 5.5l3.5-2.5 3.5 2.5v5.5l-3.5 2.5-3.5-2.5z M8.5 5.5l3.5 2.5 3.5-2.5M12 8v5.5" fill="none" stroke="#666"/><path d="M5 5v8M2 10l3 3 3-3" stroke="#333" stroke-width="2" fill="none"/><path d="M3 2.5h4" stroke="#333" stroke-width="1.2"/></svg>
<svg style="position:absolute;left:374px;top:158px;" width="16" height="16" viewBox="0 0 16 16"><path d="M1.5 11l5-5" stroke="#333" stroke-width="2.2"/><path d="M6 2.5a3.2 3.2 0 1 0 3.5 3.5l-2-1z" fill="#333"/><circle cx="11.5" cy="11.5" r="4" fill="#8a8a8a"/><path d="M8 10h7M7.6 12h7.8M8 14h7M10 7.6v7.8M13 7.6v7.8" stroke="#c8c8c8" stroke-width=".6"/></svg>
<svg style="position:absolute;left:396px;top:158px;" width="16" height="16" viewBox="0 0 16 16"><text x="0" y="8" font-size="9" font-style="italic" font-family="Liberation Serif" fill="#555">fx</text><circle cx="11.5" cy="11.5" r="4" fill="#8a8a8a"/><path d="M8 10h7M7.6 12h7.8M8 14h7M10 7.6v7.8M13 7.6v7.8" stroke="#c8c8c8" stroke-width=".6"/></svg>
<div style="left:367px;top:157px;width:1px;height:19px;background:#c8c8cc"></div>
<div style="left:320px;top:183px;width:215px;height:809px;background:#fff;border:1px solid #adadad;box-sizing:border-box"></div>
<div style="left:322px;top:994px;width:99px;height:21px;background:#e6e6ea;border:1px solid #dadade;box-sizing:border-box"></div>
<svg style="position:absolute;left:326px;top:997px;" width="16" height="16" viewBox="0 0 16 16"><rect x="1" y="7" width="9" height="8" fill="#555"/><path d="M3 5h10v6" fill="none" stroke="#555" stroke-width="1.3"/><path d="M5 2h10v6" fill="none" stroke="#555" stroke-width="1.3"/><circle cx="11" cy="11" r="2.5" fill="#eee" stroke="#333"/></svg>
<div class="t" style="left:345px;top:996.0px;height:16px;line-height:16px;font-size:11.7px;color:#1e1e1e">Table Explorer</div>
<div style="left:421px;top:993px;width:109px;height:23px;background:#fafafb"></div>
<svg style="position:absolute;left:426px;top:997px;" width="16" height="16" viewBox="0 0 16 16"><rect x="1" y="2" width="14" height="12" fill="#fff" stroke="#444"/><rect x="1" y="2" width="14" height="2" fill="#222"/><rect x="3" y="6" width="4" height="3" fill="#e0a050"/><rect x="8" y="9" width="4" height="3" fill="#e0a050"/></svg>
<div class="t" style="left:444px;top:997.0px;height:16px;line-height:16px;font-size:11.7px;color:#1e1e1e">Code Explorer...</div>
<div style="left:1479px;top:133px;width:187px;height:19px;background:#bfcadb"></div>
<div class="t" style="left:1483px;top:135.0px;height:16px;line-height:16px;font-size:11.7px;color:#1e1e1e">DDO Explorer (Inactive)</div>
<svg style="position:absolute;left:1636px;top:137px;" width="10" height="12" viewBox="0 0 10 12"><path d="M3.5 1.5h3v5h-3z" fill="#444" stroke="#222" stroke-width="1"/><path d="M2 7h6" stroke="#222" stroke-width="1.3"/><path d="M5 7v4" stroke="#222" stroke-width="1"/></svg>
<svg style="position:absolute;left:1652px;top:138px;" width="9" height="9" viewBox="0 0 9 9"><path d="M1 1l7 7M8 1L1 8" stroke="#222" stroke-width="1.2"/></svg>
<div style="left:1479px;top:133px;width:187px;height:1px;background:#a4adba"></div>
<svg style="position:absolute;left:1484px;top:157px;" width="16" height="16" viewBox="0 0 16 16"><path d="M5 5h4v10H5zM9 6h5v8H9" fill="none" stroke="#777" stroke-width="1.2"/><path d="M4 1v5M1.5 3.5h5" stroke="#777" stroke-width="1.3"/></svg>
<svg style="position:absolute;left:1506px;top:157px;" width="16" height="16" viewBox="0 0 16 16"><path d="M3 9h5v6H3z" fill="#777"/><ellipse cx="5.5" cy="9" rx="2.5" ry="1" fill="#999"/><rect x="9" y="2" width="6" height="4" fill="none" stroke="#888"/><path d="M3 6V3h3M13 10v3h-3" stroke="#777" fill="none"/></svg>
<svg style="position:absolute;left:1527px;top:157px;" width="16" height="16" viewBox="0 0 16 16"><rect x="3" y="4" width="6" height="6" fill="none" stroke="#888"/><path d="M9 4h6v8H9" fill="none" stroke="#888"/><circle cx="5" cy="12" r="3.5" fill="#777"/></svg>
<svg style="position:absolute;left:1556px;top:157px;" width="16" height="16" viewBox="0 0 16 16"><path d="M2 4h6v11H2zM8 6h6v8H8" fill="none" stroke="#888" stroke-width="1.2"/><path d="M2 2h4" stroke="#888"/></svg>
<svg style="position:absolute;left:1578px;top:157px;" width="16" height="16" viewBox="0 0 16 16"><path d="M1 1l4 4M5 1L1 5" stroke="#888"/><rect x="8" y="2" width="5" height="3" fill="none" stroke="#888"/><path d="M10 5v3M4 8h9M4 8v3M13 8v3" stroke="#888" fill="none"/><rect x="2" y="11" width="5" height="4" fill="none" stroke="#888"/><rect x="10" y="11" width="5" height="4" fill="none" stroke="#888"/></svg>
<svg style="position:absolute;left:1606px;top:157px;" width="16" height="16" viewBox="0 0 16 16"><path d="M1 4h5M3.5 1.5v5" stroke="#777" stroke-width="1.3"/><rect x="8" y="2" width="7" height="4" fill="none" stroke="#888"/><path d="M11 6v5H7" stroke="#888" fill="none"/><rect x="2" y="10" width="6" height="4" fill="none" stroke="#888"/></svg>
<svg style="position:absolute;left:1628px;top:157px;" width="16" height="16" viewBox="0 0 16 16"><path d="M1 4h5" stroke="#777" stroke-width="1.3"/><rect x="8" y="2" width="7" height="4" fill="none" stroke="#888"/><path d="M11 6v5H7" stroke="#888" fill="none"/><rect x="2" y="10" width="6" height="4" fill="none" stroke="#888"/></svg>
<div style="left:1549px;top:157px;width:1px;height:19px;background:#c8c8cc"></div>
<div style="left:1599px;top:157px;width:1px;height:19px;background:#c8c8cc"></div>
<div style="left:1479px;top:183px;width:185px;height:809px;background:#fff;border:1px solid #adadad;box-sizing:border-box"></div>
<div style="left:1480px;top:993px;width:102px;height:23px;background:#fafafb"></div>
<svg style="position:absolute;left:1484px;top:997px;" width="16" height="16" viewBox="0 0 16 16"><rect x="8.5" y="2" width="6.5" height="8" rx="1" fill="#222"/><ellipse cx="11.75" cy="2.2" rx="3.25" ry="1.3" fill="#777" stroke="#111" stroke-width=".6"/><rect x="4" y="6" width="3" height="3" fill="#222"/><path d="M5.5 9v2.5M2 14v-2.5h7V14" stroke="#222" stroke-width="1.1" fill="none"/><rect x="0.5" y="13" width="3" height="2.5" fill="#222"/><rect x="7.5" y="13" width="3" height="2.5" fill="#222"/></svg>
<div class="t" style="left:1503px;top:997.0px;height:16px;line-height:16px;font-size:11.7px;color:#1e1e1e">DDO Explor...</div>
<div style="left:1582px;top:994px;width:77px;height:21px;background:#e6e6ea;border:1px solid #dadade;box-sizing:border-box"></div>
<svg style="position:absolute;left:1585px;top:997px;" width="16" height="16" viewBox="0 0 16 16"><rect x="5" y="1" width="10" height="13" fill="none" stroke="#555" stroke-width="1.2"/><path d="M7 4h6M7 7h6M7 10h6M10 1v13" stroke="#777"/><path d="M2 8l2 6 2-6" fill="#333"/></svg>
<div class="t" style="left:1604px;top:996.0px;height:16px;line-height:16px;font-size:11.7px;color:#1e1e1e">Properties</div>
<div style="left:100px;top:1017px;width:1567px;height:23px;background:#0c70c8"></div>
<div class="t" style="left:103px;top:1021.0px;height:16px;line-height:16px;font-size:11.4px;color:#fff">UserFeedback table</div>
<svg style="position:absolute;left:1418px;top:1020px;" width="18" height="18" viewBox="0 0 18 18"><circle cx="9" cy="9" r="7.5" fill="#fff" stroke="#d02030" stroke-width="1.6"/><path d="M9 4v6" stroke="#d02030" stroke-width="2.2"/><circle cx="9" cy="13" r="1.2" fill="#d02030"/></svg>
<div class="t" style="left:1565px;top:1021.0px;height:16px;line-height:16px;font-size:11.7px;color:#5aaee8">CAPS</div>
<div class="t" style="left:1609px;top:1021.0px;height:16px;line-height:16px;font-size:11.7px;color:#fff">NUM</div>
<svg style="position:absolute;left:1654px;top:1027px;" width="10" height="10" viewBox="0 0 10 10"><g fill="#6ab0e8"><rect x="7" y="1" width="1" height="1"/><rect x="5" y="3" width="1" height="1"/><rect x="7" y="3" width="1" height="1"/><rect x="3" y="5" width="1" height="1"/><rect x="5" y="5" width="1" height="1"/><rect x="7" y="5" width="1" height="1"/><rect x="1" y="7" width="1" height="1"/><rect x="3" y="7" width="1" height="1"/><rect x="5" y="7" width="1" height="1"/><rect x="7" y="7" width="1" height="1"/></g></svg>
<div style="left:540px;top:133px;width:935px;height:697px;background:#eeeef2"></div>
<div class="t" style="left:550px;top:136.0px;height:16px;line-height:16px;font-size:11.7px;color:#1e1e1e">WebApp.src</div>
<div style="left:634px;top:135px;width:172px;height:19px;background:#0e70c0"></div>
<div class="t" style="left:641px;top:136.0px;height:16px;line-height:16px;font-size:11.4px;color:#fff">UserFeedback [Table Editor]</div>
<svg style="position:absolute;left:792px;top:138px;" width="12" height="12" viewBox="0 0 12 12"><path d="M2 2l8 8M10 2L2 10" stroke="#fff" stroke-width="2"/></svg>
<div style="left:541px;top:153px;width:933px;height:2px;background:#7c9fc4"></div>
<svg style="position:absolute;left:1418px;top:137px;" width="10" height="11" viewBox="0 0 10 11"><path d="M7 2L2 5.5 7 9z" fill="none" stroke="#999"/></svg>
<svg style="position:absolute;left:1432px;top:137px;" width="10" height="11" viewBox="0 0 10 11"><path d="M3 2l5 3.5L3 9z" fill="none" stroke="#999"/></svg>
<svg style="position:absolute;left:1446px;top:139px;" width="10" height="7" viewBox="0 0 10 7"><path d="M1 1h8L5 6z" fill="#555"/></svg>
<svg style="position:absolute;left:1459px;top:136px;" width="13" height="13" viewBox="0 0 13 13"><path d="M2 2l9 9M11 2L2 11" stroke="#444" stroke-width="1.3"/></svg>
<div style="left:541px;top:155px;width:916px;height:675px;background:#ededee"></div>
<div style="left:1457px;top:155px;width:15px;height:675px;background:#e8e8e8"></div>
<div style="left:1458px;top:172px;width:13px;height:549px;background:#c2c2c2"></div>
<svg style="position:absolute;left:1459px;top:158px;" width="11" height="9" viewBox="0 0 11 9"><path d="M1.5 7L5.5 3l4 4" stroke="#333" stroke-width="1.8" fill="none"/></svg>
<svg style="position:absolute;left:1459px;top:812px;" width="11" height="9" viewBox="0 0 11 9"><path d="M1.5 2l4 4 4-4" stroke="#333" stroke-width="1.8" fill="none"/></svg>
<div class="t" style="left:548px;top:167.0px;height:16px;line-height:16px;font-size:11.7px;color:#1e1e1e">Table Name:</div>
<div style="left:619px;top:164px;width:282px;height:23px;background:#eeeeee;border:1px solid #cfcfcf;box-sizing:border-box"></div>
<div class="t" style="left:623px;top:167.0px;height:16px;line-height:16px;font-size:11.7px;color:#1e1e1e">UserFeedback (1)</div>
<div class="t" style="left:913px;top:167.0px;height:16px;line-height:16px;font-size:11.7px;color:#1e1e1e">Description:</div>
<div style="left:983px;top:163px;width:462px;height:24px;background:#fff;border:1px solid #8a8a8a;box-sizing:border-box"></div>
<div class="t" style="left:987px;top:167.0px;height:16px;line-height:16px;font-size:11.7px;color:#1e1e1e">UserFeedback</div>
<svg style="position:absolute;left:552px;top:202px;" width="16" height="16" viewBox="0 0 16 16"><path d="M1 3h9M1 6h9M1 9h9" stroke="#333" stroke-width="1.6"/><path d="M1 12h9" stroke="#c02020" stroke-width="1.6"/><path d="M14 9v4h-3M12 11l-1.5 2 1.5 2" stroke="#1c5aa8" stroke-width="1.3" fill="none"/></svg>
<div class="t" style="left:570px;top:202.0px;height:16px;line-height:16px;font-size:11.7px;color:#1e1e1e">Add Column</div>
<div style="left:644px;top:201px;width:1px;height:19px;background:#c8c8cc"></div>
<svg style="position:absolute;left:651px;top:202px;" width="16" height="16" viewBox="0 0 16 16"><path d="M1 3h9M1 6h9M1 9h9" stroke="#333" stroke-width="1.6"/><path d="M1 12h9" stroke="#c02020" stroke-width="1.6"/><path d="M14 7v5h-3M12.5 10.5l-2 1.5 2 1.5" stroke="#1c5aa8" stroke-width="1.3" fill="none"/></svg>
<div class="t" style="left:668px;top:202.0px;height:16px;line-height:16px;font-size:11.7px;color:#1e1e1e">Insert Column</div>
<div style="left:750px;top:201px;width:1px;height:19px;background:#c8c8cc"></div>
<svg style="position:absolute;left:757px;top:202px;" width="16" height="16" viewBox="0 0 16 16"><path d="M1 3h9M1 6h9M1 9h9M1 12h9" stroke="#555" stroke-width="1.6"/><path d="M10 9l4 5M14 9l-4 5" stroke="#d02020" stroke-width="1.3"/></svg>
<div class="t" style="left:774px;top:202.0px;height:16px;line-height:16px;font-size:11.7px;color:#1e1e1e">Delete Column</div>
<div style="left:546px;top:232px;width:693px;height:384px;background:#fff;border:1px solid #8c8c8c;box-sizing:border-box"></div>
<div style="left:547px;top:294px;width:574px;height:18px;background:#ececec"></div>
<div style="left:547px;top:276px;width:673px;height:1px;background:#efefef"></div>
<div style="left:547px;top:294px;width:673px;height:1px;background:#efefef"></div>
<div style="left:547px;top:312px;width:673px;height:1px;background:#efefef"></div>
<div style="left:547px;top:330px;width:673px;height:1px;background:#efefef"></div>
<div style="left:547px;top:348px;width:673px;height:1px;background:#efefef"></div>
<div style="left:547px;top:366px;width:673px;height:1px;background:#efefef"></div>
<div style="left:547px;top:384px;width:673px;height:1px;background:#efefef"></div>
<div style="left:547px;top:402px;width:673px;height:1px;background:#efefef"></div>
<div style="left:547px;top:420px;width:673px;height:1px;background:#efefef"></div>
<div style="left:547px;top:438px;width:673px;height:1px;background:#efefef"></div>
<div style="left:547px;top:456px;width:673px;height:1px;background:#efefef"></div>
<div style="left:547px;top:474px;width:673px;height:1px;background:#efefef"></div>
<div style="left:547px;top:492px;width:673px;height:1px;background:#efefef"></div>
<div style="left:547px;top:510px;width:673px;height:1px;background:#efefef"></div>
<div style="left:547px;top:528px;width:673px;height:1px;background:#efefef"></div>
<div style="left:547px;top:546px;width:673px;height:1px;background:#efefef"></div>
<div style="left:547px;top:564px;width:673px;height:1px;background:#efefef"></div>
<div style="left:547px;top:582px;width:673px;height:1px;background:#efefef"></div>
<div style="left:547px;top:600px;width:673px;height:1px;background:#efefef"></div>
<div style="left:565px;top:236px;width:1px;height:378px;background:#ececec"></div>
<div style="left:760px;top:236px;width:1px;height:378px;background:#ececec"></div>
<div style="left:867px;top:236px;width:1px;height:378px;background:#ececec"></div>
<div style="left:939px;top:236px;width:1px;height:378px;background:#ececec"></div>
<div style="left:1014px;top:236px;width:1px;height:378px;background:#ececec"></div>
<div style="left:1121px;top:236px;width:1px;height:378px;background:#ececec"></div>
<div style="left:547px;top:276px;width:673px;height:1px;background:#eeeeee"></div>
<div style="left:547px;top:294px;width:673px;height:1px;background:#eeeeee"></div>
<div style="left:547px;top:312px;width:673px;height:1px;background:#eeeeee"></div>
<div style="left:547px;top:330px;width:673px;height:1px;background:#eeeeee"></div>
<div style="left:547px;top:348px;width:673px;height:1px;background:#eeeeee"></div>
<div style="left:547px;top:366px;width:673px;height:1px;background:#eeeeee"></div>
<div style="left:547px;top:384px;width:673px;height:1px;background:#eeeeee"></div>
<div style="left:547px;top:402px;width:673px;height:1px;background:#eeeeee"></div>
<div style="left:547px;top:420px;width:673px;height:1px;background:#eeeeee"></div>
<div style="left:547px;top:438px;width:673px;height:1px;background:#eeeeee"></div>
<div style="left:547px;top:456px;width:673px;height:1px;background:#eeeeee"></div>
<div style="left:547px;top:474px;width:673px;height:1px;background:#eeeeee"></div>
<div style="left:547px;top:492px;width:673px;height:1px;background:#eeeeee"></div>
<div style="left:547px;top:510px;width:673px;height:1px;background:#eeeeee"></div>
<div style="left:547px;top:528px;width:673px;height:1px;background:#eeeeee"></div>
<div style="left:547px;top:546px;width:673px;height:1px;background:#eeeeee"></div>
<div style="left:547px;top:564px;width:673px;height:1px;background:#eeeeee"></div>
<div style="left:547px;top:582px;width:673px;height:1px;background:#eeeeee"></div>
<div style="left:547px;top:600px;width:673px;height:1px;background:#eeeeee"></div>
<div style="left:1220px;top:233px;width:17px;height:382px;background:#f4f4f4"></div>
<svg style="position:absolute;left:1223px;top:239px;" width="11" height="8" viewBox="0 0 11 8"><path d="M1.5 6.5l4-4 4 4" stroke="#c4c4c4" stroke-width="1.2" fill="none"/></svg>
<svg style="position:absolute;left:1223px;top:601px;" width="11" height="8" viewBox="0 0 11 8"><path d="M1.5 1.5l4 4 4-4" stroke="#c4c4c4" stroke-width="1.2" fill="none"/></svg>
<div class="t" style="left:572px;top:238.0px;height:16px;line-height:16px;font-size:11.7px;color:#1e1e1e">Name</div>
<div class="t" style="left:767px;top:238.0px;height:16px;line-height:16px;font-size:11.7px;color:#1e1e1e">Type</div>
<div class="t" style="left:874px;top:238.0px;height:16px;line-height:16px;font-size:11.7px;color:#1e1e1e">Size</div>
<div class="t" style="left:946px;top:238.0px;height:16px;line-height:16px;font-size:11.7px;color:#1e1e1e">Main Index</div>
<div class="t" style="left:1021px;top:238.0px;height:16px;line-height:16px;font-size:11.7px;color:#1e1e1e">DataFlex Type</div>
<div class="t" style="left:567px;top:259.0px;height:16px;line-height:16px;font-size:11.7px;color:#1e1e1e">Id</div>
<div class="t" style="left:762px;top:259.0px;height:16px;line-height:16px;font-size:11.7px;color:#1e1e1e">int</div>
<div class="t" style="right:982px;top:259.0px;height:16px;line-height:16px;font-size:11.7px;text-align:right;color:#1e1e1e">10</div>
<div class="t" style="right:908px;top:259.0px;height:16px;line-height:16px;font-size:11.7px;text-align:right;color:#1e1e1e">1</div>
<div class="t" style="left:1016px;top:259.0px;height:16px;line-height:16px;font-size:11.7px;color:#1e1e1e">Numeric</div>
<div class="t" style="left:567px;top:277.0px;height:16px;line-height:16px;font-size:11.7px;color:#1e1e1e">Input</div>
<div class="t" style="left:762px;top:277.0px;height:16px;line-height:16px;font-size:11.7px;color:#1e1e1e">nvarchar(max)</div>
<div class="t" style="right:982px;top:277.0px;height:16px;line-height:16px;font-size:11.7px;text-align:right;color:#1e1e1e">65000</div>
<div class="t" style="left:1016px;top:277.0px;height:16px;line-height:16px;font-size:11.7px;color:#1e1e1e">Text</div>
<div class="t" style="left:567px;top:295.0px;height:16px;line-height:16px;font-size:11.7px;color:#1e1e1e">Subject</div>
<div class="t" style="left:762px;top:295.0px;height:16px;line-height:16px;font-size:11.7px;color:#1e1e1e">nvarchar</div>
<div class="t" style="right:982px;top:295.0px;height:16px;line-height:16px;font-size:11.7px;text-align:right;color:#1e1e1e">255</div>
<div class="t" style="right:908px;top:295.0px;height:16px;line-height:16px;font-size:11.7px;text-align:right;color:#1e1e1e">2</div>
<div class="t" style="left:1016px;top:295.0px;height:16px;line-height:16px;font-size:11.7px;color:#1e1e1e">ASCII</div>
<div style="left:546px;top:620px;width:904px;height:3px;background:#c8c8c8"></div>
<div style="left:547px;top:648px;width:901px;height:177px;background:#ebebef;border:1px solid #dedee2;border-bottom:none;box-sizing:border-box"></div>
<div style="left:547px;top:627px;width:54px;height:22px;background:#f6f6f8;border:1px solid #dcdcdc;border-bottom:none;box-sizing:border-box"></div>
<div class="t" style="left:554px;top:629.0px;height:16px;line-height:16px;font-size:11.7px;color:#1e1e1e">Indexes</div>
<div style="left:601px;top:629px;width:79px;height:20px;background:#e4e4e6;border:1px solid #d4d4d4;border-bottom:none;box-sizing:border-box"></div>
<div class="t" style="left:606px;top:631.0px;height:16px;line-height:16px;font-size:11.7px;color:#1e1e1e">Relationships</div>
<svg style="position:absolute;left:556px;top:655px;" width="16" height="16" viewBox="0 0 16 16"><path d="M1 3.5h5M3.5 1v5" stroke="#1a9a2a" stroke-width="1.8"/><rect x="6.5" y="0.5" width="8" height="7" fill="#e8e8e8" stroke="#333"/><path d="M8.3 6.5l2.2-5 2.2 5M9 5h3" stroke="#222" stroke-width="1.1" fill="none"/><path d="M7.5 9.5h5l-5 5h5" stroke="#222" stroke-width="1.5" fill="none"/></svg>
<div class="t" style="left:573px;top:655.0px;height:16px;line-height:16px;font-size:11.7px;color:#1e1e1e">Add Index</div>
<svg style="position:absolute;left:635px;top:655px;" width="16" height="16" viewBox="0 0 16 16"><path d="M1 2.5h5" stroke="#d02020" stroke-width="2"/><rect x="6.5" y="0.5" width="8" height="7" fill="#e8e8e8" stroke="#333"/><path d="M8.3 6.5l2.2-5 2.2 5M9 5h3" stroke="#222" stroke-width="1.1" fill="none"/><path d="M7.5 9.5h5l-5 5h5" stroke="#222" stroke-width="1.5" fill="none"/></svg>
<div class="t" style="left:652px;top:655.0px;height:16px;line-height:16px;font-size:11.7px;color:#1e1e1e">Delete Index</div>
<div style="left:724px;top:653px;width:1px;height:19px;background:#c8c8cc"></div>
<svg style="position:absolute;left:731px;top:655px;" width="16" height="16" viewBox="0 0 16 16"><path d="M1 3h9M1 6h9M1 9h9M1 12h9" stroke="#333" stroke-width="1.6"/><path d="M13 15V8M10.5 10.5L13 8l2.5 2.5" stroke="#1c5aa8" stroke-width="1.7" fill="none"/></svg>
<div class="t" style="left:748px;top:655.0px;height:16px;line-height:16px;font-size:11.7px;color:#1e1e1e">Promote Index</div>
<svg style="position:absolute;left:834px;top:655px;" width="16" height="16" viewBox="0 0 16 16"><path d="M1 3h9M1 6h9M1 9h9M1 12h9" stroke="#333" stroke-width="1.6"/><path d="M13 8v7M10.5 12.5L13 15l2.5-2.5" stroke="#1c5aa8" stroke-width="1.7" fill="none"/></svg>
<div class="t" style="left:851px;top:655.0px;height:16px;line-height:16px;font-size:11.7px;color:#1e1e1e">Demote Index</div>
<div style="left:558px;top:689px;width:161px;height:136px;background:#fff;border:1px solid #a4a4a4;border-bottom:none;box-sizing:border-box"></div>
<div class="t" style="left:566px;top:695.0px;height:16px;line-height:16px;font-size:11.7px;color:#1e1e1e">Indexes</div>
<div style="left:560px;top:733px;width:157px;height:1px;background:#f0f0f0"></div>
<div style="left:560px;top:751px;width:157px;height:1px;background:#f0f0f0"></div>
<div style="left:560px;top:770px;width:157px;height:1px;background:#f0f0f0"></div>
<div style="left:560px;top:789px;width:157px;height:1px;background:#f0f0f0"></div>
<div style="left:560px;top:808px;width:157px;height:1px;background:#f0f0f0"></div>
<div class="t" style="left:582px;top:717.0px;height:16px;line-height:16px;font-size:11.7px;color:#1e1e1e">Index 1</div>
<div style="left:580px;top:734px;width:137px;height:18px;background:#0b6cd4"></div>
<div class="t" style="left:582px;top:735.0px;height:16px;line-height:16px;font-size:11.7px;color:#fff">Index 2</div>
<svg style="position:absolute;left:565px;top:736px;" width="15" height="14" viewBox="0 0 15 14"><path d="M1 5h7V1.5L14 7l-6 5.5V9H1z" fill="#2a8c7c"/></svg>
<div class="t" style="left:729px;top:692.0px;height:16px;line-height:16px;font-size:11.7px;color:#1e1e1e">Index Segment:</div>
<svg style="position:absolute;left:819px;top:692px;" width="16" height="16" viewBox="0 0 16 16"><path d="M1 3h9M1 6h9M1 9h9" stroke="#333" stroke-width="1.6"/><path d="M1 12h9" stroke="#c02020" stroke-width="1.6"/><path d="M14 9v4h-3M12 11l-1.5 2 1.5 2" stroke="#1c5aa8" stroke-width="1.3" fill="none"/></svg>
<div class="t" style="left:837px;top:692.0px;height:16px;line-height:16px;font-size:11.7px;color:#1e1e1e">Add</div>
<svg style="position:absolute;left:866px;top:692px;" width="16" height="16" viewBox="0 0 16 16"><path d="M1 3h9M1 6h9M1 9h9" stroke="#333" stroke-width="1.6"/><path d="M1 12h9" stroke="#c02020" stroke-width="1.6"/><path d="M14 7v5h-3M12.5 10.5l-2 1.5 2 1.5" stroke="#1c5aa8" stroke-width="1.3" fill="none"/></svg>
<div class="t" style="left:883px;top:692.0px;height:16px;line-height:16px;font-size:11.7px;color:#1e1e1e">Insert</div>
<svg style="position:absolute;left:920px;top:692px;" width="16" height="16" viewBox="0 0 16 16"><path d="M1 3h9M1 6h9M1 9h9M1 12h9" stroke="#555" stroke-width="1.6"/><path d="M10 9l4 5M14 9l-4 5" stroke="#d02020" stroke-width="1.3"/></svg>
<div class="t" style="left:938px;top:692.0px;height:16px;line-height:16px;font-size:11.7px;color:#1e1e1e">Delete</div>
<div style="left:977px;top:690px;width:1px;height:20px;background:#c8c8cc"></div>
<svg style="position:absolute;left:984px;top:692px;" width="16" height="16" viewBox="0 0 16 16"><path d="M1 3h9M1 6h9M1 9h9M1 12h9" stroke="#333" stroke-width="1.6"/><path d="M13 15V8M10.5 10.5L13 8l2.5 2.5" stroke="#1c5aa8" stroke-width="1.7" fill="none"/></svg>
<div class="t" style="left:1001px;top:692.0px;height:16px;line-height:16px;font-size:11.7px;color:#1e1e1e">Promote</div>
<svg style="position:absolute;left:1055px;top:692px;" width="16" height="16" viewBox="0 0 16 16"><path d="M1 3h9M1 6h9M1 9h9M1 12h9" stroke="#333" stroke-width="1.6"/><path d="M13 8v7M10.5 12.5L13 15l2.5-2.5" stroke="#1c5aa8" stroke-width="1.7" fill="none"/></svg>
<div class="t" style="left:1072px;top:692.0px;height:16px;line-height:16px;font-size:11.7px;color:#1e1e1e">Demote</div>
<div style="left:725px;top:720px;width:250px;height:105px;background:#fff;border:1px solid #a4a4a4;border-bottom:none;box-sizing:border-box"></div>
<div style="left:897px;top:722px;width:1px;height:103px;background:#e2e2e2"></div>
<div class="t" style="left:731px;top:724.0px;height:16px;line-height:16px;font-size:11.7px;color:#1e1e1e">Column</div>
<div class="t" style="left:901px;top:724.0px;height:16px;line-height:16px;font-size:11.7px;color:#1e1e1e">Descending</div>
<div style="left:727px;top:744px;width:246px;height:20px;background:#b9c9dd"></div>
<div class="t" style="left:729px;top:745.0px;height:16px;line-height:16px;font-size:11.7px;color:#1e1e1e">Subject</div>
<div style="left:929px;top:747px;width:13px;height:13px;background:#fff;border:1px solid #333;box-sizing:border-box"></div>
<div class="t" style="left:730px;top:765.0px;height:16px;line-height:16px;font-size:11.7px;color:#1e1e1e">Id</div>
<div style="left:929px;top:767px;width:13px;height:13px;background:#fff;border:1px solid #333;box-sizing:border-box"></div>
<div style="left:727px;top:783px;width:246px;height:1px;border-top:1px dotted #c0c0c0"></div>
<div style="left:727px;top:803px;width:246px;height:1px;border-top:1px dotted #c0c0c0"></div>
<div style="left:727px;top:822px;width:246px;height:1px;border-top:1px dotted #c0c0c0"></div>
<div style="left:897px;top:764px;width:1px;height:61px;border-left:1px dotted #c0c0c0"></div>
<div class="t" style="left:983px;top:723.0px;height:16px;line-height:16px;font-size:11.7px;color:#1e1e1e">Index Name:</div>
<div style="left:1057px;top:719px;width:378px;height:24px;background:#fff;border:1px solid #8a8a8a;box-sizing:border-box"></div>
<div class="t" style="left:1060px;top:723.0px;height:16px;line-height:16px;font-size:11.7px;color:#1e1e1e">UserFeedback002</div>
<div class="t" style="left:990px;top:751.0px;height:16px;line-height:16px;font-size:11.7px;color:#1e1e1e">Index Type:</div>
<div style="left:1057px;top:748px;width:133px;height:23px;background:#e2e2e2;border:1px solid #b8b8b8;box-sizing:border-box"></div>
<div class="t" style="left:1061px;top:751.0px;height:16px;line-height:16px;font-size:11.7px;color:#1e1e1e">Server</div>
<svg style="position:absolute;left:1175px;top:755px;" width="11" height="8" viewBox="0 0 11 8"><path d="M1.5 2l4 4 4-4" stroke="#444" stroke-width="1.2" fill="none"/></svg>
<div class="t" style="left:986px;top:781.0px;height:16px;line-height:16px;font-size:11.7px;color:#1e1e1e">Unique Index</div>
<svg style="position:absolute;left:676px;top:736px;filter:drop-shadow(1px 2px 1.5px rgba(0,0,0,0.4))" width="22" height="34" viewBox="0 0 22 34"><path d="M1 1v23.5l5.8-5.6 4.4 9.6 4.2-2-4.3-9.3h8.2z" fill="#fff" stroke="#000" stroke-width="1.2" stroke-linejoin="round"/></svg>
<div style="left:540px;top:830px;width:935px;height:162px;background:#eeeef2"></div>
<div style="left:540px;top:831px;width:935px;height:19px;background:#bfcadb"></div>
<div class="t" style="left:544px;top:833.0px;height:16px;line-height:16px;font-size:11.7px;color:#1e1e1e">Output</div>
<svg style="position:absolute;left:1445px;top:835px;" width="10" height="12" viewBox="0 0 10 12"><path d="M3.5 1.5h3v5h-3z" fill="#444" stroke="#222" stroke-width="1"/><path d="M2 7h6" stroke="#222" stroke-width="1.3"/><path d="M5 7v4" stroke="#222" stroke-width="1"/></svg>
<svg style="position:absolute;left:1461px;top:836px;" width="9" height="9" viewBox="0 0 9 9"><path d="M1 1l7 7M8 1L1 8" stroke="#222" stroke-width="1.2"/></svg>
<div style="left:540px;top:831px;width:935px;height:1px;background:#a4adba"></div>
<svg style="position:absolute;left:544px;top:855px;" width="16" height="16" viewBox="0 0 16 16"><circle cx="10" cy="10" r="3.5" fill="none" stroke="#333" stroke-width="1.3"/><path d="M7.5 12.5L4 16" stroke="#333" stroke-width="1.6"/><path d="M1 4h5M3.5 1.5L1 4l2.5 2.5" stroke="#1c4aa8" stroke-width="1.4" fill="none"/></svg>
<svg style="position:absolute;left:566px;top:855px;" width="16" height="16" viewBox="0 0 16 16"><circle cx="10" cy="10" r="3.5" fill="none" stroke="#333" stroke-width="1.3"/><path d="M7.5 12.5L4 16" stroke="#333" stroke-width="1.6"/><path d="M1 4h5M3.5 1.5L6 4 3.5 6.5" stroke="#1c4aa8" stroke-width="1.4" fill="none"/></svg>
<svg style="position:absolute;left:593px;top:855px;" width="16" height="16" viewBox="0 0 16 16"><path d="M6 2h7v9H6z" fill="none" stroke="#444" stroke-width="1.2"/><path d="M3 5h5v10H3z" fill="#eee" stroke="#444" stroke-width="1.2"/></svg>
<svg style="position:absolute;left:615px;top:855px;" width="16" height="16" viewBox="0 0 16 16"><path d="M2 2l11 11M13 2L2 13" stroke="#d01818" stroke-width="2.2"/></svg>
<svg style="position:absolute;left:643px;top:855px;" width="16" height="16" viewBox="0 0 16 16"><path d="M2 2h9v9H2z" fill="none" stroke="#666"/><path d="M5 5h9v9H5z" fill="#eee" stroke="#555"/><path d="M9.5 7v5M7 9.5h5" stroke="#555"/></svg>
<svg style="position:absolute;left:665px;top:855px;" width="16" height="16" viewBox="0 0 16 16"><path d="M2 2h9v9H2z" fill="none" stroke="#666"/><path d="M5 5h9v9H5z" fill="#eee" stroke="#555"/><path d="M7 9.5h5" stroke="#555"/></svg>
<div style="left:588px;top:853px;width:1px;height:20px;background:#c8c8cc"></div>
<div style="left:638px;top:853px;width:1px;height:20px;background:#c8c8cc"></div>
<div style="left:540px;top:876px;width:935px;height:116px;background:#fff;border:1px solid #a0a0a0;box-sizing:border-box"></div>
<div style="left:1457px;top:877px;width:16px;height:114px;background:#f0f0f0"></div>
<svg style="position:absolute;left:1459px;top:881px;" width="11" height="9" viewBox="0 0 11 9"><path d="M1.5 7L5.5 3l4 4" stroke="#444" stroke-width="1.4" fill="none"/></svg>
<div style="left:1457px;top:956px;width:15px;height:17px;background:#c8c8c8"></div>
<svg style="position:absolute;left:1459px;top:977px;" width="11" height="9" viewBox="0 0 11 9"><path d="M1.5 2l4 4 4-4" stroke="#444" stroke-width="1.4" fill="none"/></svg>
<div style="left:552px;top:877px;width:1px;height:100px;border-left:1px dotted #6a6a6a"></div>
<div style="left:566px;top:877px;width:1px;height:10px;border-left:1px dotted #6a6a6a"></div>
<div style="left:566px;top:887px;width:8px;height:1px;border-top:1px dotted #6a6a6a"></div>
<div style="left:553px;top:905px;width:8px;height:1px;border-top:1px dotted #6a6a6a"></div>
<div style="left:553px;top:923px;width:8px;height:1px;border-top:1px dotted #6a6a6a"></div>
<div style="left:553px;top:941px;width:8px;height:1px;border-top:1px dotted #6a6a6a"></div>
<div style="left:553px;top:977px;width:8px;height:1px;border-top:1px dotted #6a6a6a"></div>
<svg style="position:absolute;left:577px;top:880px;" width="12" height="14" viewBox="0 0 12 14"><path d="M2 1.5l8 5.5-8 5.5z" fill="none" stroke="#555" stroke-width="1.1"/></svg>
<div class="t" style="left:597px;top:879.0px;height:16px;line-height:16px;font-size:11.7px;color:#1e1e1e">Total Blocks&nbsp;&nbsp;&nbsp;: 14932</div>
<svg style="position:absolute;left:560px;top:897px;" width="16" height="16" viewBox="0 0 16 16"><circle cx="8" cy="8" r="7.3" fill="#1a1a1a"/><rect x="4.3" y="4.3" width="7.4" height="7.4" rx="1.2" fill="#e6e6e6"/></svg>
<div class="t" style="left:581px;top:897.0px;height:16px;line-height:16px;font-size:12.1px;color:#1e1e1e"><span style="letter-spacing:1.2px">----</span>Compile Finished<span style="letter-spacing:1.2px">----</span></div>
<svg style="position:absolute;left:560px;top:915px;" width="16" height="16" viewBox="0 0 16 16"><circle cx="8" cy="8" r="7.3" fill="#1a1a1a"/><rect x="4.3" y="4.3" width="7.4" height="7.4" rx="1.2" fill="#e6e6e6"/></svg>
<div class="t" style="left:581px;top:915.0px;height:16px;line-height:16px;font-size:12.1px;color:#1e1e1e"><span style="letter-spacing:1.2px">----</span>Executable written: C:\dev\repo\Editor-Sample\Programs\WebApp.exe</div>
<svg style="position:absolute;left:560px;top:933px;" width="16" height="16" viewBox="0 0 16 16"><circle cx="8" cy="8" r="7.5" fill="#1a82d8"/><circle cx="8" cy="4" r="1.3" fill="#fff"/><rect x="6.8" y="6.5" width="2.4" height="6.5" fill="#fff"/></svg>
<div class="t" style="left:581px;top:933.0px;height:16px;line-height:16px;font-size:11.7px;color:#1e1e1e">Starting web application: Editor Sample</div>
<svg style="position:absolute;left:549px;top:955px;" width="9" height="9" viewBox="0 0 9 9"><rect x=".5" y=".5" width="8" height="8" rx="1.5" fill="#f6f6f8" stroke="#a8a8a8"/><path d="M2.5 4.5h4" stroke="#5a68b0"/><path d="M4.5 2.5v4" stroke="#5a68b0"/></svg>
<svg style="position:absolute;left:560px;top:951px;" width="16" height="16" viewBox="0 0 16 16"><circle cx="8" cy="8" r="7.3" fill="#1ea01e"/><path d="M6 4.3l5.8 3.7-5.8 3.7z" fill="#fff"/></svg>
<div class="t" style="left:581px;top:951.0px;height:16px;line-height:16px;font-size:12.1px;color:#1e1e1e"><span style="letter-spacing:1.2px">----</span>Loading Program In Debugger<span style="letter-spacing:1.2px">----</span></div>
<div style="left:579px;top:968px;width:197px;height:18px;background:#eeeeee"></div>
<svg style="position:absolute;left:560px;top:969px;" width="16" height="16" viewBox="0 0 16 16"><circle cx="8" cy="8" r="7.3" fill="#1a1a1a"/><rect x="4.3" y="4.3" width="7.4" height="7.4" rx="1.2" fill="#e6e6e6"/></svg>
<div class="t" style="left:581px;top:969.0px;height:16px;line-height:16px;font-size:12.1px;color:#1e1e1e"><span style="letter-spacing:1.2px">----</span>Exiting Program In Debugger<span style="letter-spacing:1.2px">----</span></div>
<div style="left:553px;top:977px;width:1px;height:1px;"></div>
<div style="left:541px;top:994px;width:206px;height:21px;background:#e6e6ea;border:1px solid #dadade;box-sizing:border-box"></div>
<svg style="position:absolute;left:546px;top:997px;" width="16" height="16" viewBox="0 0 16 16"><rect x="1" y="2" width="14" height="12" fill="#fff" stroke="#333"/><rect x="1" y="2" width="14" height="2" fill="#222"/><path d="M2 13l3-6 3 6z" fill="#e8c820"/><path d="M9 9l2 2 3-5" stroke="#333" stroke-width="1.3" fill="none"/></svg>
<div class="t" style="left:566px;top:996.0px;height:16px;line-height:16px;font-size:11.7px;color:#1e1e1e">Problem Resolution [WebApp.src]</div>
<div style="left:747px;top:993px;width:68px;height:23px;background:#fafafb"></div>
<svg style="position:absolute;left:751px;top:997px;" width="16" height="16" viewBox="0 0 16 16"><path d="M9 2H2v12h7" fill="none" stroke="#444" stroke-width="1.3"/><path d="M5 8h9M11 5l3 3-3 3" stroke="#222" stroke-width="1.8" fill="none"/></svg>
<div class="t" style="left:771px;top:997.0px;height:16px;line-height:16px;font-size:11.7px;color:#1e1e1e">Output</div>
<div style="left:815px;top:994px;width:151px;height:21px;background:#e6e6ea;border:1px solid #dadade;box-sizing:border-box"></div>
<svg style="position:absolute;left:819px;top:997px;" width="16" height="16" viewBox="0 0 16 16"><path d="M3 4h10v11H3z" fill="none" stroke="#444" stroke-width="1.2"/><path d="M6 2h4v3H6z" fill="#eee" stroke="#444"/><path d="M5 10l2 2 4-5" stroke="#333" stroke-width="1.3" fill="none"/></svg>
<div class="t" style="left:838px;top:996.0px;height:16px;line-height:16px;font-size:11.7px;color:#1e1e1e">To Do List [WebApp.src]</div>
<div style="left:0px;top:1040px;width:1920px;height:40px;background:#c9e1ed"></div>
<div style="left:0px;top:1040px;width:46px;height:40px;background:#cde4ef"></div>
<svg style="position:absolute;left:17px;top:1052px;" width="16" height="16" viewBox="0 0 16 16"><path d="M0 2.2l6.5-.9v6.3H0zM7.3 1.2L16 0v7.6H7.3zM0 8.4h6.5v6.3L0 13.8zM7.3 8.4H16V16l-8.7-1.2z" fill="#111"/></svg>
</body></html>
